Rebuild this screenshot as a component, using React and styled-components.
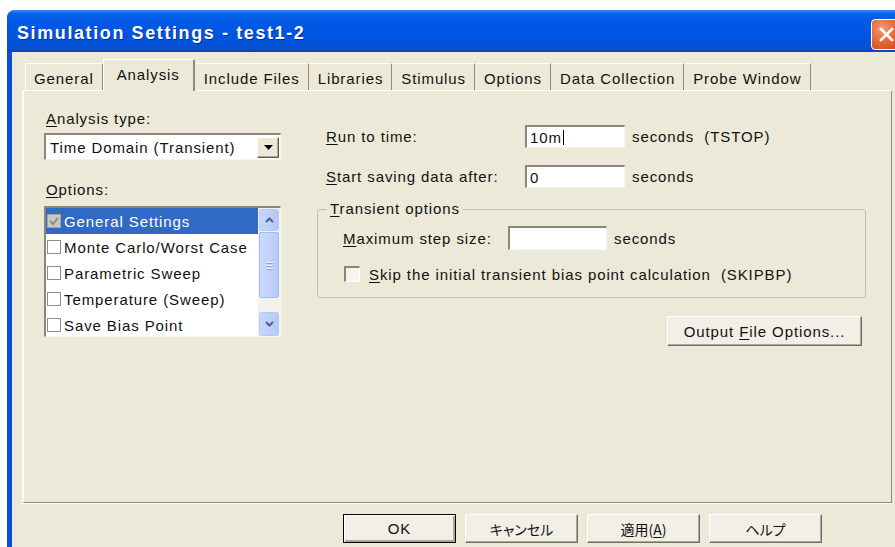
import React from 'react'
import styled, { createGlobalStyle } from 'styled-components'

const GlobalStyle = createGlobalStyle`
  html, body {
    margin: 0;
    padding: 0;
    background: #fff;
    overflow: hidden;
  }
  body {
    font-family: "Liberation Sans", Arial, "Noto Sans CJK JP", sans-serif;
    font-size: 15px;
    letter-spacing: 0.9px;
    color: #111;
  }
`

const Window = styled.div`
  margin: 10px 0 0 7px;
  width: 900px;
  height: 560px;
  display: flex;
  flex-direction: column;
  background: linear-gradient(90deg, #0a4fd6, #0a5ee8 50%, #0a4fd6);
  border-radius: 8px 8px 0 0;
  overflow: hidden;
`

const TitleBar = styled.div`
  height: 42px;
  flex: none;
  display: flex;
  align-items: flex-start;
  justify-content: space-between;
  padding: 9px 5px 0 10px;
  box-sizing: border-box;
  background: linear-gradient(180deg, #3d8cf5 0%, #0a62ea 8%, #0058e6 30%, #0055e0 70%, #0a4fd0 92%, #0843b8 100%);
`

const Title = styled.div`
  line-height: 28px;
  font-weight: bold;
  font-size: 18px;
  letter-spacing: 1.6px;
  color: #fff;
  text-shadow: 1px 1px 0 #0a2e8a;
`

const CloseButton = styled.div`
  width: 29px;
  height: 29px;
  border: 1px solid #fff;
  border-radius: 4px;
  background: radial-gradient(circle at 35% 30%, #f29a78 0%, #e2612f 55%, #c8461c 100%);
  display: flex;
  align-items: center;
  justify-content: center;
`

const Body = styled.div`
  flex: 1;
  margin: 0 5px;
  padding: 7px 10px 0;
  background: #ece9d8;
  display: flex;
  flex-direction: column;
`

const TabStrip = styled.div`
  display: flex;
  align-items: flex-end;
  padding-left: 3px;
  height: 31px;
`

const Tab = styled.div`
  position: relative;
  z-index: ${p => (p.$active ? 1 : 0)};
  height: ${p => (p.$active ? 32 : 27)}px;
  margin-bottom: ${p => (p.$active ? -1 : 0)}px;
  padding: ${p => (p.$active ? '0 13px 3px' : '2px 8px 0')};
  box-sizing: border-box;
  display: flex;
  align-items: center;
  background: #ece9d8;
  border-top: 1px solid #fff;
  border-left: 1px solid ${p => (p.$active || p.$first ? '#fff' : 'transparent')};
  border-right: ${p => (p.$active ? 2 : 1)}px solid #8d8a7d;
  border-radius: 2px 2px 0 0;
  white-space: nowrap;
`

const Panel = styled.div`
  height: 413px;
  box-sizing: border-box;
  border: 1px solid #8d8a7d;
  border-top-color: #fff;
  border-left: 2px solid #fff;
  box-shadow: 0 1px 0 #fff;
  display: flex;
  padding: 19px 0 0 20px;
`

const LeftColumn = styled.div`
  width: 237px;
  display: flex;
  flex-direction: column;
`

const Label = styled.div`
  line-height: 18px;
  padding-left: ${p => p.$indent || 0}px;
  margin-top: ${p => p.$top || 0}px;
  white-space: nowrap;
`

const Key = styled.span`
  text-decoration: underline;
  text-underline-offset: 2px;
`

const Select = styled.div`
  margin-top: 5px;
  height: 27px;
  box-sizing: border-box;
  background: #fff;
  border-top: 2px solid #8a877a;
  border-left: 2px solid #8a877a;
  border-bottom: 1px solid #f6f5ef;
  border-right: 1px solid #f6f5ef;
  display: flex;
  align-items: center;
  justify-content: space-between;
  padding: 0 1px 0 4px;
`

const DropButton = styled.div`
  width: 22px;
  height: 21px;
  box-sizing: border-box;
  background: #ece9d8;
  border: 1px solid;
  border-color: #fff #5a584f #5a584f #fff;
  box-shadow: inset -1px -1px #aca899;
  display: flex;
  align-items: center;
  justify-content: center;
`

const ListBox = styled.div`
  margin-top: 7px;
  height: 131px;
  box-sizing: border-box;
  background: #fff;
  border-top: 2px solid #8a877a;
  border-left: 2px solid #8a877a;
  border-bottom: 1px solid #f6f5ef;
  border-right: 1px solid #f6f5ef;
  display: flex;
`

const ListItems = styled.div`
  flex: 1;
  overflow: hidden;
`

const ListRow = styled.div`
  height: 26px;
  display: flex;
  align-items: center;
  gap: 3px;
  padding-left: 1px;
  white-space: nowrap;
  background: ${p => (p.$selected ? '#316ac5' : 'transparent')};
  color: ${p => (p.$selected ? '#fff' : '#111')};
`

const ItemBox = styled.div`
  width: 14px;
  height: 14px;
  flex: none;
  box-sizing: border-box;
  border: 1px solid ${p => (p.$checked ? '#a5a49e' : '#8e8e8e')};
  background: ${p => (p.$checked ? '#c9c8c2' : '#fff')};
  display: flex;
  align-items: center;
  justify-content: center;
`

const ScrollBar = styled.div`
  width: 22px;
  flex: none;
  background: #f3f2ec;
  display: flex;
  flex-direction: column;
`

const ScrollButton = styled.div`
  height: ${p => p.$h}px;
  box-sizing: border-box;
  margin: 1px 1px 0;
  border: 1px solid #b8c9f2;
  border-radius: 2px;
  background: linear-gradient(90deg, #c7d7fb, #b4c8f7);
  display: flex;
  align-items: center;
  justify-content: center;
`

const Thumb = styled.div`
  height: 66px;
  box-sizing: border-box;
  margin: 1px 1px 0;
  border: 1px solid #a4bbef;
  border-radius: 2px;
  background: linear-gradient(90deg, #cad9fc, #b8cbf8);
  display: flex;
  flex-direction: column;
  align-items: center;
  justify-content: center;
  gap: 2px;
`

const Grip = styled.div`
  width: 7px;
  height: 1px;
  background: #eef3fe;
  box-shadow: 0 1px #8aa4de;
`

const Track = styled.div`
  flex: 1;
`

const RightColumn = styled.div`
  width: 549px;
  margin-left: 36px;
  padding-top: 15px;
  display: flex;
  flex-direction: column;
`

const FieldRow = styled.div`
  display: grid;
  grid-template-columns: ${p => p.$labelWidth}px ${p => p.$inputWidth}px auto;
  align-items: center;
  height: 23px;
  padding-left: ${p => p.$indent}px;
  margin-top: ${p => p.$top || 0}px;
  white-space: nowrap;
`

const TextBox = styled.div`
  height: ${p => p.$h || 23}px;
  box-sizing: border-box;
  background: #fff;
  border-top: 2px solid #8a877a;
  border-left: 2px solid #8a877a;
  border-bottom: 1px solid #f6f5ef;
  border-right: 1px solid #f6f5ef;
  padding-left: 3px;
  display: flex;
  align-items: center;
`

const Caret = styled.span`
  width: 1px;
  height: 15px;
  background: #000;
  margin-left: 1px;
`

const Unit = styled.span`
  padding-left: 7px;
`

const GroupBox = styled.fieldset`
  margin: 12px 0 0;
  padding: 0 0 15px;
  border: 1px solid #c2bfb0;
  border-radius: 3px;
  min-inline-size: 0;
`

const GroupLegend = styled.legend`
  margin-left: 9px;
  padding: 0 3px;
  line-height: 18px;
`

const CheckRow = styled.div`
  display: flex;
  align-items: center;
  gap: 9px;
  height: 16px;
  margin-top: 17px;
  padding-left: 26px;
  white-space: nowrap;
`

const CheckBox = styled.div`
  width: 16px;
  height: 16px;
  box-sizing: border-box;
  border-top: 2px solid #8a877a;
  border-left: 2px solid #8a877a;
  border-bottom: 1px solid #fff;
  border-right: 1px solid #fff;
  background: #f5f4ee;
`

const PushButton = styled.div`
  width: ${p => p.$w}px;
  height: ${p => p.$h}px;
  box-sizing: border-box;
  display: flex;
  align-items: center;
  justify-content: center;
  background: #f1efe6;
  border: 1px solid;
  border-color: ${p => (p.$default ? '#000' : '#fff #716f64 #716f64 #fff')};
  box-shadow: ${p => (p.$default
    ? 'inset 1px 1px #fff, inset -2px -2px #aca899'
    : 'inset -1px -1px #aca899')};
  white-space: nowrap;
`

const OutputButton = styled(PushButton)`
  align-self: flex-end;
  margin: 18px 4px 0 0;
`

const ButtonRow = styled.div`
  display: flex;
  gap: 9px;
  margin-top: 11px;
  padding-left: 321px;
`

const JpLabel = styled.span`
  font-family: "Noto Sans CJK JP", sans-serif;
  font-size: 14px;
  letter-spacing: 0;
  font-feature-settings: "palt";
`

const options = [
  'General Settings',
  'Monte Carlo/Worst Case',
  'Parametric Sweep',
  'Temperature (Sweep)',
  'Save Bias Point',
]

const tabs = [
  'General',
  'Analysis',
  'Include Files',
  'Libraries',
  'Stimulus',
  'Options',
  'Data Collection',
  'Probe Window',
]

function Chevron({ up }) {
  return (
    <svg width="9" height="6" viewBox="0 0 9 6">
      <path
        d={up ? 'M1 5 L4.5 1.5 L8 5' : 'M1 1 L4.5 4.5 L8 1'}
        fill="none"
        stroke="#4d6185"
        strokeWidth="2"
      />
    </svg>
  )
}

export default function App() {
  return (
    <>
      <GlobalStyle />
      <Window>
        <TitleBar>
          <Title>Simulation Settings - test1-2</Title>
          <CloseButton>
            <svg width="17" height="17" viewBox="0 0 17 17">
              <path d="M3 3 L14 14 M14 3 L3 14" stroke="#fff" strokeWidth="2.6" strokeLinecap="square" />
            </svg>
          </CloseButton>
        </TitleBar>
        <Body>
          <TabStrip>
            {tabs.map((t, i) => (
              <Tab key={t} $active={t === 'Analysis'} $first={i === 0}>{t}</Tab>
            ))}
          </TabStrip>
          <Panel>
            <LeftColumn>
              <Label $indent={2}><Key>A</Key>nalysis type:</Label>
              <Select>
                <span>Time Domain (Transient)</span>
                <DropButton>
                  <svg width="9" height="5" viewBox="0 0 9 5">
                    <path d="M0 0 H9 L4.5 5 Z" fill="#000" />
                  </svg>
                </DropButton>
              </Select>
              <Label $indent={2} $top={21}><Key>O</Key>ptions:</Label>
              <ListBox>
                <ListItems>
                  {options.map((o, i) => (
                    <ListRow key={o} $selected={i === 0}>
                      <ItemBox $checked={i === 0}>
                        {i === 0 && (
                          <svg width="10" height="9" viewBox="0 0 10 9">
                            <path d="M1 4 L4 7 L9 1" fill="none" stroke="#8f8e88" strokeWidth="2" />
                          </svg>
                        )}
                      </ItemBox>
                      {o}
                    </ListRow>
                  ))}
                </ListItems>
                <ScrollBar>
                  <ScrollButton $h={22}><Chevron up /></ScrollButton>
                  <Thumb><Grip /><Grip /><Grip /></Thumb>
                  <Track />
                  <ScrollButton $h={24}><Chevron /></ScrollButton>
                </ScrollBar>
              </ListBox>
            </LeftColumn>
            <RightColumn>
              <FieldRow $indent={9} $labelWidth={199} $inputWidth={100}>
                <span><Key>R</Key>un to time:</span>
                <TextBox>10m<Caret /></TextBox>
                <Unit>seconds&nbsp;&nbsp;(TSTOP)</Unit>
              </FieldRow>
              <FieldRow $indent={9} $labelWidth={199} $inputWidth={100} $top={17}>
                <span><Key>S</Key>tart saving data after:</span>
                <TextBox>0</TextBox>
                <Unit>seconds</Unit>
              </FieldRow>
              <GroupBox>
                <GroupLegend><Key>T</Key>ransient options</GroupLegend>
                <FieldRow $indent={25} $labelWidth={165} $inputWidth={99} $top={8}>
                  <span><Key>M</Key>aximum step size:</span>
                  <TextBox $h={24} />
                  <Unit>seconds</Unit>
                </FieldRow>
                <CheckRow>
                  <CheckBox />
                  <span><Key>S</Key>kip the initial transient bias point calculation&nbsp;&nbsp;(SKIPBP)</span>
                </CheckRow>
              </GroupBox>
              <OutputButton $w={195} $h={30}>
                <span>Output <Key>F</Key>ile Options...</span>
              </OutputButton>
            </RightColumn>
          </Panel>
          <ButtonRow>
            <PushButton $w={113} $h={29} $default>OK</PushButton>
            <PushButton $w={113} $h={29}><JpLabel>キャンセル</JpLabel></PushButton>
            <PushButton $w={113} $h={29}><JpLabel>適用(<Key>A</Key>)</JpLabel></PushButton>
            <PushButton $w={113} $h={29}><JpLabel>ヘルプ</JpLabel></PushButton>
          </ButtonRow>
        </Body>
      </Window>
    </>
  )
}
